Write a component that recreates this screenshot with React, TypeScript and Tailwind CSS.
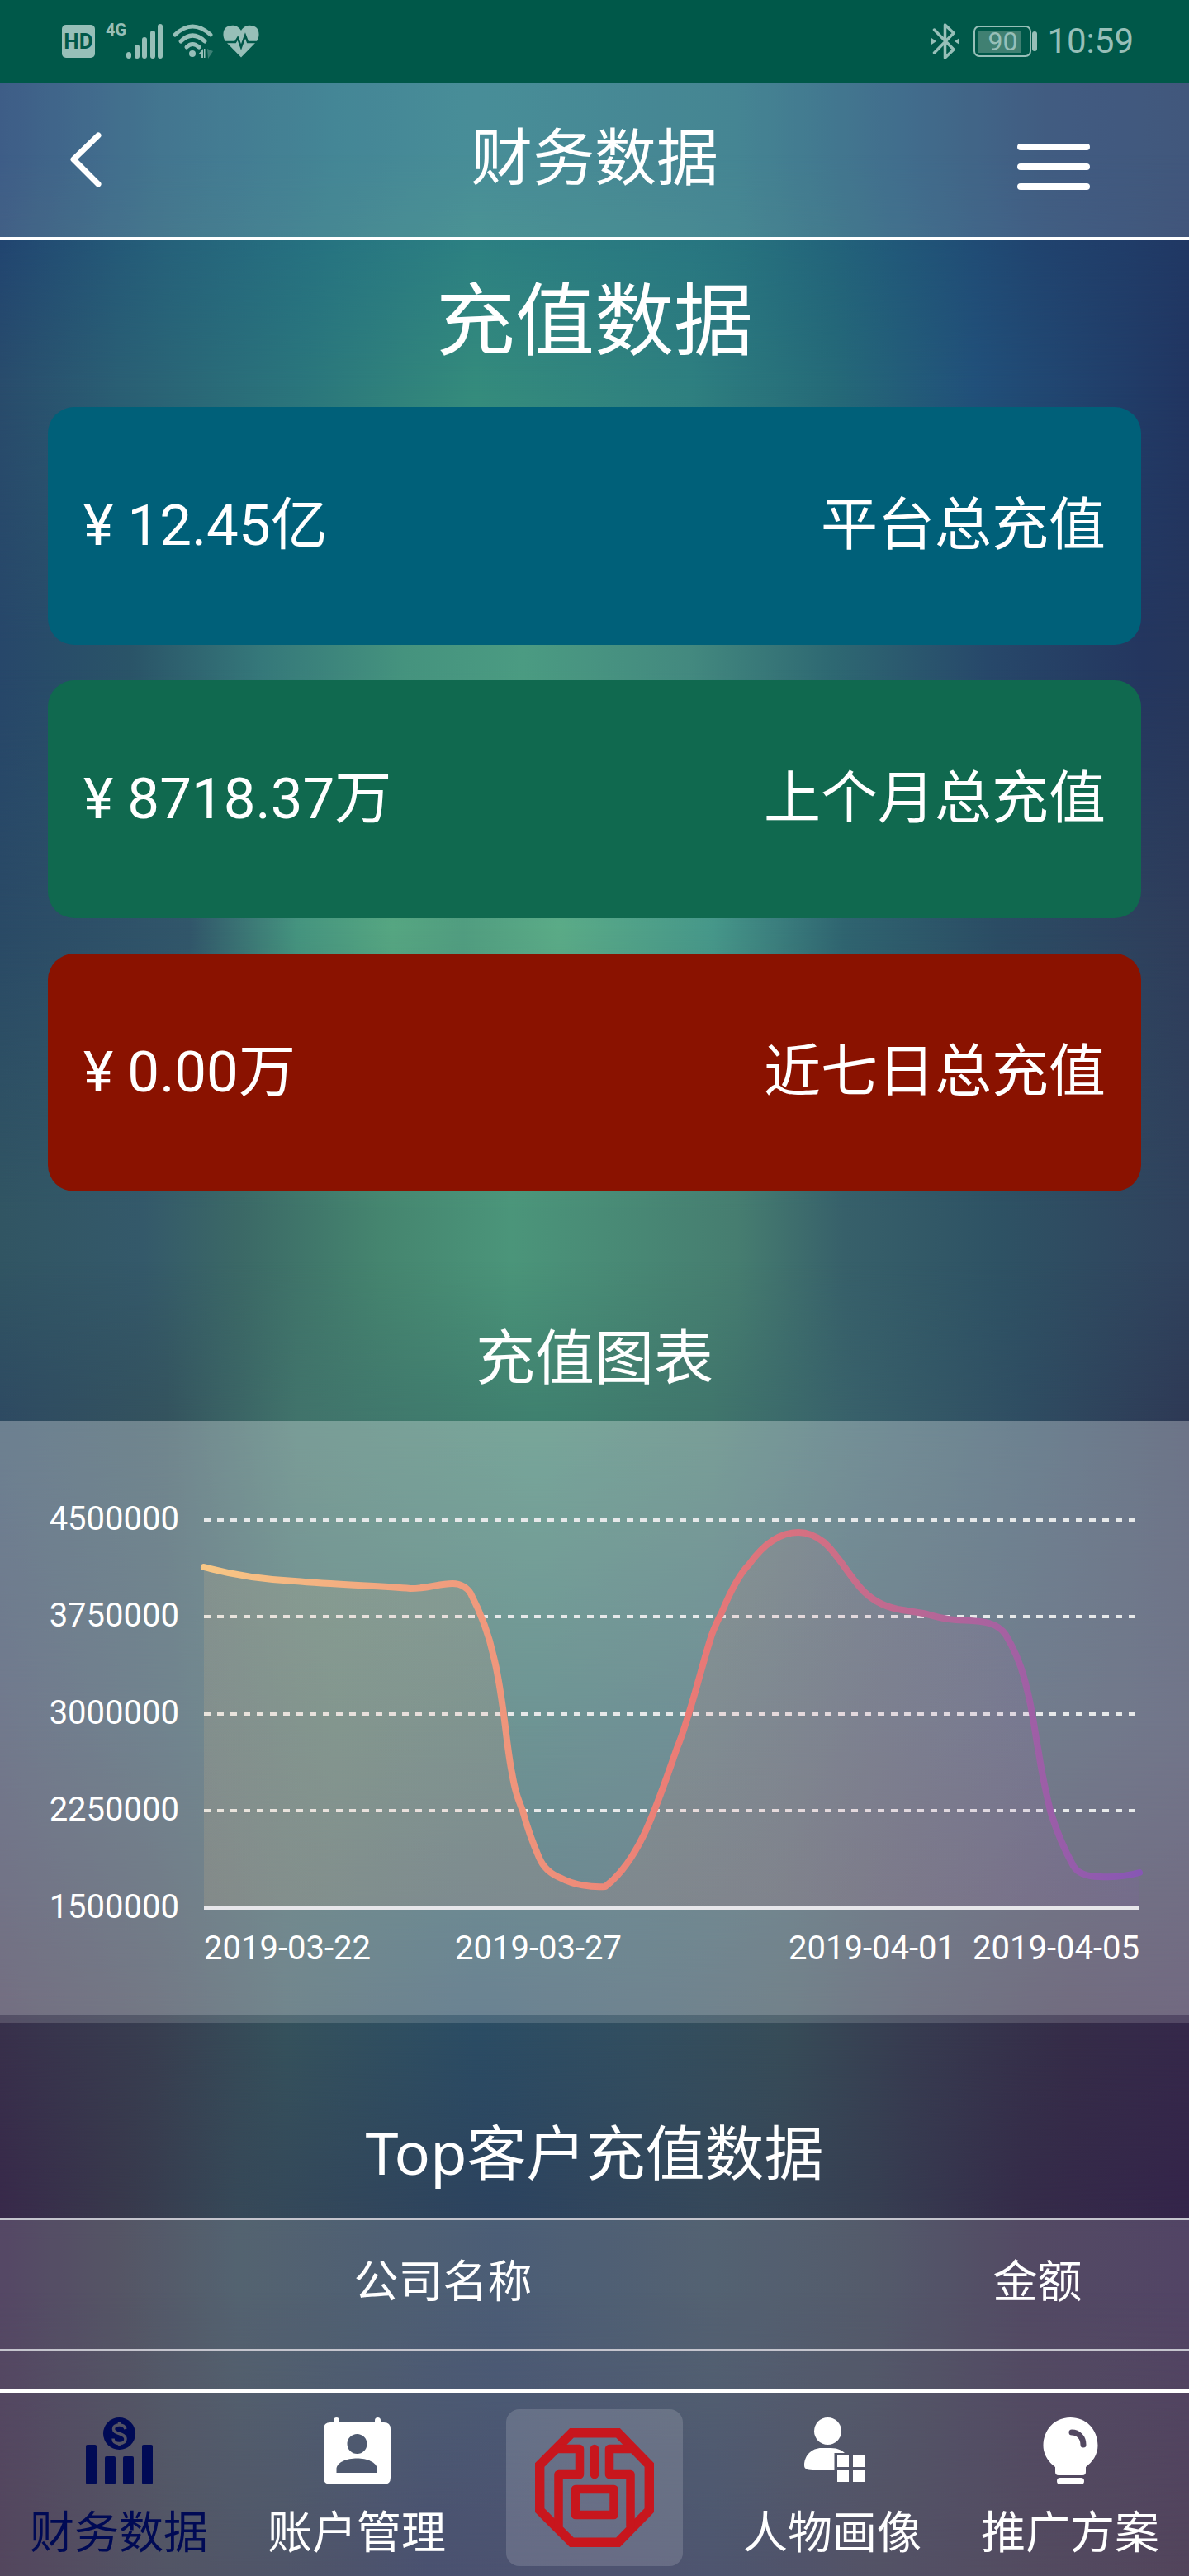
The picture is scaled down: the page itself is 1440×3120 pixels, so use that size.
import type { ReactNode } from "react";

const cards = [
  { amount: "¥ 12.45亿", label: "平台总充值", tone: "bg-[#006079]" },
  { amount: "¥ 8718.37万", label: "上个月总充值", tone: "bg-[#10694f]" },
  { amount: "¥ 0.00万", label: "近七日总充值", tone: "bg-[#8a1200]" },
];

const gridRows = [
  { y: 120, label: "4500000" },
  { y: 237, label: "3750000" },
  { y: 355, label: "3000000" },
  { y: 472, label: "2250000" },
];

const curve =
  "M247 177 C283 187 319 192 357 194 C403 198 460 200 497 203 C518 203 532 197 548 197 C558 197 566 202 570 209 C584 236 592 258 598 286 C604 310 607 334 610 355 C614 385 616 407 620 426 C624 450 628 459 633 472 C640 498 646 513 653 529 C658 541 667 549 680 554 C695 562 716 565 733 564 C775 532 795 467 820 396 C826 382 830 368 834 355 C845 320 852 290 862 259 C866 248 870 240 874 232 C884 208 894 187 907 174 C922 153 942 135 967 135 C980 135 989 140 998 147 C1014 161 1026 184 1042 202 C1054 216 1068 224 1087 228 C1098 230 1107 231 1118 233 C1131 236 1140 240 1158 241 C1172 242 1187 242 1198 245 C1208 248 1214 253 1218 259 C1230 279 1238 299 1243 322 C1250 347 1253 375 1258 402 C1262 428 1267 451 1272 472 C1280 499 1290 521 1300 539 C1306 549 1318 552 1332 552 C1350 553 1366 551 1380 547";

/* Aurora backdrop: horizontal colour bands that fade into one another down the page. */
function Backdrop() {
  return (
    <div aria-hidden="true" className="absolute inset-0 -z-10">
      <div className="absolute inset-0 bg-[linear-gradient(90deg,#1d4173_0%,#235f7d_14%,#247184_28%,#287a86_40%,#257080_62%,#20567a_75%,#20406c_88%,#203a66_100%)]" />
      <div className="absolute inset-0 bg-[linear-gradient(90deg,#294c6c_0%,#2a5f74_10%,#2a757c_25%,#348b7c_40%,#2e7f80_58%,#256a78_70%,#21507a_82%,#213561_100%)] [mask-image:linear-gradient(180deg,transparent_6%,black_15%)]" />
      <div className="absolute inset-0 bg-[linear-gradient(90deg,#27476a_0%,#2a5468_11%,#35787a_22%,#45937e_34%,#4b9b82_44%,#43897f_58%,#2e6872_70%,#27486a_83%,#24365f_96%,#26365c_100%)] [mask-image:linear-gradient(180deg,transparent_15%,black_25%)]" />
      <div className="absolute inset-0 bg-[linear-gradient(90deg,#2a4a66_0%,#31566a_16%,#45947f_25%,#56a682_33%,#519d80_39%,#5bab87_47%,#46978a_60%,#2f6470_71%,#2b4c64_84%,#2f3d5b_100%)] [mask-image:linear-gradient(180deg,transparent_26%,black_36%)]" />
      <div className="absolute inset-0 bg-[linear-gradient(90deg,#315563_0%,#34596a_12%,#3b6866_20%,#45856f_32%,#4b957a_43%,#467d70_62%,#37606a_71%,#2e5264_84%,#30425d_100%)] [mask-image:linear-gradient(180deg,transparent_36%,black_47%)]" />
      <div className="absolute inset-0 bg-[linear-gradient(90deg,#2e4a62_0%,#34535e_14%,#41736b_25%,#3f816f_45%,#40756c_60%,#38606a_72%,#2f4d62_86%,#2e3955_100%)] [mask-image:linear-gradient(180deg,transparent_49%,black_55%)]" />
      <div className="absolute inset-0 bg-[linear-gradient(90deg,#35405c_0%,#34505e_15%,#366461_28%,#306666_45%,#345f69_60%,#364e60_74%,#353b58_100%)] [mask-image:linear-gradient(180deg,transparent_55%,black_67%)]" />
      <div className="absolute inset-0 bg-[linear-gradient(90deg,#38304b_0%,#383e50_13%,#35515c_24%,#2b4c64_40%,#324e60_54%,#374c58_66%,#373b50_77%,#352c48_90%,#35284a_100%)] [mask-image:linear-gradient(180deg,transparent_67%,black_79%)]" />
      <div className="absolute inset-0 bg-[linear-gradient(90deg,#38284a_0%,#38384b_10%,#364858_20%,#2c415e_42%,#36475a_60%,#373f52_73%,#352b49_86%,#34244a_100%)] [mask-image:linear-gradient(180deg,transparent_79%,black_87%)]" />
      <div className="absolute inset-0 bg-[linear-gradient(90deg,#362641_0%,#34384b_14%,#31384f_24%,#2b3357_36%,#2f3558_50%,#2f3856_60%,#36344b_74%,#34243f_100%)] [mask-image:linear-gradient(180deg,transparent_89%,black_100%)]" />
    </div>
  );
}

function StatusBar() {
  return (
    <div className="flex h-[100px] items-center justify-between bg-[#005849] pr-[67px] pl-[75px] text-[#97bfb8]">
      <div className="flex items-center">
        <span className="flex size-10 items-center justify-center rounded-[5px] bg-[#97bfb8] text-[26px] font-bold text-[#005849]">
          HD
        </span>
        <span className="ml-[13px] self-start text-[20px] leading-4 font-bold">4G</span>
        <svg viewBox="0 0 44 44" className="size-11" fill="currentColor">
          <rect x="0" y="35" width="6" height="8" rx="3" />
          <rect x="10" y="26" width="6" height="17" rx="3" />
          <rect x="19" y="17" width="6" height="26" rx="3" />
          <rect x="29" y="9" width="6" height="34" rx="3" />
          <rect x="38" y="1" width="6" height="42" rx="3" />
        </svg>
        <svg viewBox="0 0 50 44" className="ml-3 h-11 w-[50px]" fill="none" stroke="currentColor" strokeWidth="5" strokeLinecap="round">
          <path d="M3 14 Q24 -6 46 14" />
          <path d="M10 22 Q24 8 39 22" />
          <path d="M17 29 Q24 22 32 29" />
          <circle cx="24" cy="37" r="4" fill="currentColor" stroke="none" />
          <path d="M31 38 L37 31 V42 H34 V38 Z" fill="currentColor" stroke="none" />
          <path d="M38 31 h1.500 v11 h-1.500z" fill="currentColor" stroke="none" />
          <path d="M42 31 L49 34 L43 43 Z" fill="currentColor" stroke="none" opacity="0.4" />
        </svg>
        <svg viewBox="0 0 44 40" className="ml-[11px] h-10 w-11">
          <path
            fill="currentColor"
            d="M22 39.500 L3 20 C-1 14 0 6 4 3 C10 -1 18 0 22 7 C26 0 34 -1 40 3 C44 6 45 14 41 20 Z"
          />
          <path d="M0 21 H15 L18 16 L22 27 L27 13 L30 21 H44" fill="none" stroke="#005849" strokeWidth="2.500" />
        </svg>
      </div>
      <div className="flex items-center">
        <svg viewBox="0 0 34 44" className="h-11 w-[34px]" fill="none" stroke="currentColor" strokeWidth="3.500" strokeLinejoin="round" strokeLinecap="round">
          <path d="M3.500 8 L27 32 L16.500 42 V2 L27 12 L3.500 36" />
          <path d="M0 18 L6 22 L0 26 Z M34 18 L28 22 L34 26 Z" fill="currentColor" stroke="none" />
        </svg>
        <span className="ml-[17px] flex h-[38px] w-[70px] items-center rounded-[7px] border-2 border-[#97bfb8] bg-[linear-gradient(#408072,#408072)] bg-size-[52px_27px] bg-position-[4px_4px] bg-no-repeat pl-[15px] text-[32px] leading-none">
          90
        </span>
        <span className="ml-px h-6 w-[6px] rounded-full bg-[#97bfb8]" />
        <span className="ml-3 text-[42px] leading-[50px]">10:59</span>
      </div>
    </div>
  );
}

function RechargeChart() {
  return (
    <svg viewBox="0 0 1440 720" className="block w-full" role="img" aria-label="充值图表">
      <defs>
        <linearGradient id="curve" gradientUnits="userSpaceOnUse" x1="247" y1="0" x2="1380" y2="0">
          <stop offset="0" stopColor="#f8c785" />
          <stop offset="0.220" stopColor="#f1a27f" />
          <stop offset="0.400" stopColor="#ee8c79" />
          <stop offset="0.520" stopColor="#ea7a75" />
          <stop offset="0.630" stopColor="#d77180" />
          <stop offset="0.800" stopColor="#b1659a" />
          <stop offset="1" stopColor="#8757b4" />
        </linearGradient>
      </defs>
      <g stroke="#e7e9ea" strokeWidth="4" strokeDasharray="8 8">
        {gridRows.map((row) => (
          <line key={row.y} x1="247" x2="1380" y1={row.y} y2={row.y} />
        ))}
      </g>
      <line x1="247" x2="1380" y1="590" y2="590" stroke="#e7e6ea" strokeWidth="4" />
      <path d={curve + " V588 H247 Z"} fill="url(#curve)" opacity="0.130" />
      <path d={curve} fill="none" stroke="url(#curve)" strokeWidth="8" strokeLinecap="round" strokeLinejoin="round" />
      <g fill="white" fontSize="40" textAnchor="end">
        {gridRows.map((row) => (
          <text key={row.y} x="217" y={row.y + 12}>
            {row.label}
          </text>
        ))}
        <text x="217" y="602">1500000</text>
      </g>
      <g fill="white" fontSize="40">
        <text x="247" y="652">2019-03-22</text>
        <text x="652" y="652" textAnchor="middle">2019-03-27</text>
        <text x="1056" y="652" textAnchor="middle">2019-04-01</text>
        <text x="1380" y="652" textAnchor="end">2019-04-05</text>
      </g>
    </svg>
  );
}

function FinanceIcon() {
  return (
    <svg viewBox="0 0 81 81" className="size-[81px]" fill="currentColor">
      <mask id="coin">
        <rect width="81" height="81" fill="white" />
        <path
          d="M48 14 C47 10 44 9 40.500 9 C36 9 33.500 11 33.500 14 C33.500 21 48 18 48 26 C48 30 45 31.500 40.500 31.500 C36 31.500 33 29.500 33 25.500 M40.500 6 V10 M40.500 31 V34"
          fill="none"
          stroke="black"
          strokeWidth="3.500"
        />
      </mask>
      <circle cx="40.500" cy="19.500" r="19.500" mask="url(#coin)" />
      <rect x="0" y="33" width="13" height="48" rx="2" />
      <rect x="23" y="47" width="13" height="34" rx="2" />
      <rect x="45" y="47" width="13" height="34" rx="2" />
      <rect x="68" y="33" width="13" height="48" rx="2" />
    </svg>
  );
}

function AccountIcon() {
  return (
    <svg viewBox="0 0 81 81" className="size-[81px]" fill="currentColor">
      <rect x="12" y="0" width="7" height="12" rx="3.500" />
      <rect x="62" y="0" width="7" height="12" rx="3.500" />
      <path
        fillRule="evenodd"
        d="M8 6 H73 Q81 6 81 14 V73 Q81 81 73 81 H8 Q0 81 0 73 V14 Q0 6 8 6 Z M40.500 20 A12 12 0 1 0 40.500 44 A12 12 0 1 0 40.500 20 Z M15.500 67 H65 V63 C65 54 52 49.500 40.500 49.500 C28 49.500 15.500 54 15.500 63 Z"
      />
    </svg>
  );
}

function PersonaIcon() {
  return (
    <svg viewBox="0 0 81 81" className="size-[81px]" fill="currentColor">
      <ellipse cx="34.500" cy="16.500" rx="16.500" ry="16.500" />
      <path d="M6 58 C6 46 15 37 27 37 H38 C45 37 51 39 55 43 H42.500 V64 H20 C10 64 6 63 6 58 Z" />
      <rect x="46" y="46" width="14" height="14" />
      <rect x="65" y="46" width="14" height="14" />
      <rect x="46" y="64" width="14" height="14" />
      <rect x="65" y="64" width="14" height="14" />
    </svg>
  );
}

function BulbIcon() {
  return (
    <svg viewBox="0 0 81 81" className="size-[81px]" fill="currentColor">
      <mask id="glint">
        <rect width="81" height="81" fill="white" />
        <path d="M42 18 C50 18 56 24 56 33" fill="none" stroke="black" strokeWidth="7" strokeLinecap="round" />
      </mask>
      <path
        mask="url(#glint)"
        d="M40.500 0 C59 0 73.500 14 73.500 34 C73.500 45 67 54 59 60 V66 Q59 70 55 70 H26 Q22 70 22 66 V60 C14 54 7.500 45 7.500 34 C7.500 14 22 0 40.500 0 Z"
      />
      <rect x="24" y="73" width="33" height="8" rx="4" />
    </svg>
  );
}

function Logo() {
  return (
    <svg viewBox="0 0 144 144" className="size-36" fill="none" stroke="#c8161d" strokeWidth="10.500" strokeLinejoin="round" strokeLinecap="round">
      <path
        d="M44.500 5.700 H100.500 L138.300 44.500 V99.500 L100.500 138.300 H44.500 L5.700 99.500 V44.500 Z"
        strokeWidth="11.400"
        strokeLinejoin="miter"
      />
      <path d="M27 25 H54 V56 H28.500 V118" />
      <path d="M117 25 H90 V56 H115.500 V118" />
      <path d="M72 25 V56" />
      <path d="M49 74 H95.500 V105 H49 Z" />
    </svg>
  );
}

function Tab({ label, icon, active }: { label: string; icon: ReactNode; active?: boolean }) {
  return (
    <a
      href="#"
      aria-current={active ? "page" : undefined}
      className={
        active
          ? "flex flex-col items-center gap-7 pt-[30px] text-[#000a55]"
          : "flex flex-col items-center gap-7 pt-[30px] text-white"
      }
    >
      {icon}
      <span className="text-[54px] leading-[64px] whitespace-nowrap">{label}</span>
    </a>
  );
}

export default function App() {
  return (
    <div
      lang="zh-CN"
      className="relative isolate flex min-h-screen flex-col overflow-hidden font-[Roboto,'Noto_Sans_CJK_SC',sans-serif] text-white"
    >
      <Backdrop />
      <StatusBar />

      <header className="grid h-[191px] grid-cols-[1fr_auto_1fr] items-center border-b-4 border-white bg-white/15 px-[82px]">
        <button aria-label="返回" className="justify-self-start">
          <svg viewBox="0 0 44 72" className="h-[72px] w-11" fill="none" stroke="currentColor" strokeWidth="7" strokeLinecap="round" strokeLinejoin="round">
            <path d="M37 6 L7 35 L37 65" />
          </svg>
        </button>
        <h1 className="pb-1 text-[75px] leading-[100px]">财务数据</h1>
        <button aria-label="菜单" className="mt-4 mr-[38px] flex w-[88px] flex-col gap-4 justify-self-end">
          <span className="h-2 rounded-full bg-white" />
          <span className="h-2 rounded-full bg-white" />
          <span className="h-2 rounded-full bg-white" />
        </button>
      </header>

      <main className="flex flex-1 flex-col">
        <section className="px-[58px]">
          <h2 className="pt-[26px] pb-8 text-center text-[96px] leading-[144px]">充值数据</h2>
          <div className="flex flex-col gap-[43px]">
            {cards.map((card) => (
              <div
                key={card.label}
                className={`${card.tone} flex min-h-72 items-center justify-between rounded-[32px] px-[43px] text-[69px] leading-[100px]`}
              >
                <span>{card.amount}</span>
                <span>{card.label}</span>
              </div>
            ))}
          </div>
        </section>

        <section>
          <h2 className="pt-[153px] pb-[25px] text-center text-[72px] leading-[100px]">充值图表</h2>
          <div className="bg-white/30">
            <RechargeChart />
          </div>
          <div className="h-[9px] bg-white/15" />
        </section>

        <section className="flex flex-1 flex-col">
          <h2 className="pt-[106px] pb-[31px] text-center font-['Noto_Sans','Noto_Sans_CJK_SC',sans-serif] text-[72px] leading-[100px]">
            Top客户充值数据
          </h2>
          <div className="flex-1 bg-white/15">
            <table className="w-full table-fixed border-collapse text-[54px] leading-[64px]">
              <colgroup>
                <col className="w-[74.5%]" />
                <col />
              </colgroup>
              <thead>
                <tr className="border-y-2 border-[#c5c5ce]">
                  <th scope="col" className="pt-11 pb-12 font-normal">公司名称</th>
                  <th scope="col" className="pt-11 pb-12 font-normal">金额</th>
                </tr>
              </thead>
            </table>
          </div>
        </section>
      </main>

      <nav className="grid h-[226px] grid-cols-5 border-t-4 border-white bg-white/15">
        <Tab label="财务数据" icon={<FinanceIcon />} active />
        <Tab label="账户管理" icon={<AccountIcon />} />
        <a href="#" aria-label="首页" className="mt-5 flex h-[190px] w-[214px] items-center justify-center justify-self-center rounded-2xl bg-white/15">
          <Logo />
        </a>
        <Tab label="人物画像" icon={<PersonaIcon />} />
        <Tab label="推广方案" icon={<BulbIcon />} />
      </nav>
    </div>
  );
}
